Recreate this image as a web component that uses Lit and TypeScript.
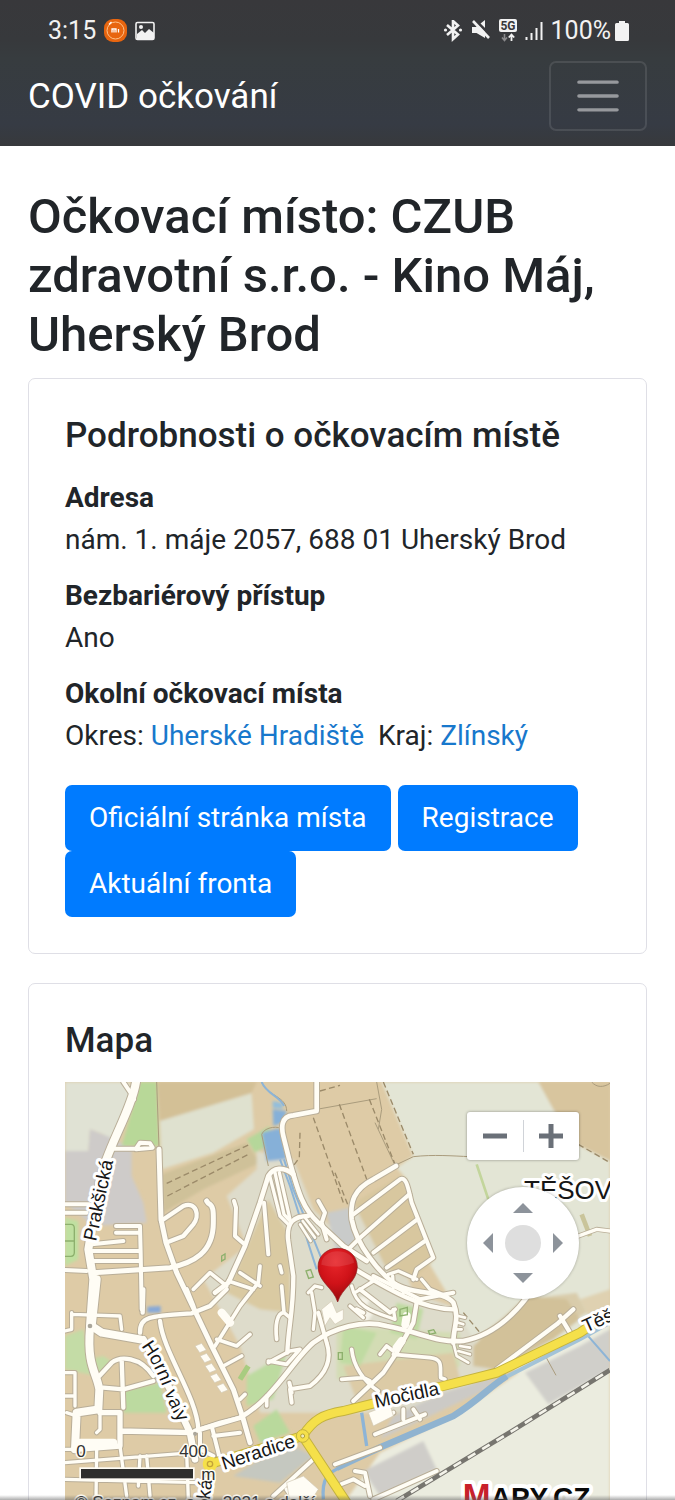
import { LitElement, html, svg, css } from "lit";
import { customElement, state } from "lit/decorators.js";

type Area = { fill: string; points: string };
type Road = { width: number; d: string };

/* Map drawing space: three units per screen pixel. */
const AREAS: Area[] = [
  { fill: "#e0e2d4", points: "15,8 205,8 225,40 165,200 130,165 90,150 85,215 15,215" },
  { fill: "#cecbc9", points: "15,215 85,215 90,150 165,180 215,215 215,290 250,370 260,430 100,440 15,370" },
  { fill: "#b8d898", points: "240,8 290,8 297,200 185,200" },
  { fill: "#d3c096", points: "292,8 590,8 575,40 300,125" },
  { fill: "#dfe1cf", points: "300,125 575,42 582,150 460,220 305,270" },
  { fill: "#cfc199", points: "305,285 560,190 600,250 430,330 310,400" },
  { fill: "#b5d79a", points: "560,180 630,140 620,200 585,220" },
  { fill: "#bfe0a0", points: "15,415 55,425 55,540 15,560" },
  { fill: "#dedccb", points: "590,215 700,240 760,390 840,470 880,390 890,360 1000,470 1060,640 1400,760 1500,700 1180,960 1060,1000 600,1000 540,800 430,600 560,500 500,350 590,270" },
  { fill: "#dacaa2", points: "560,500 625,360 690,470 690,700 600,690 500,640" },
  { fill: "#c9cbca", points: "800,400 870,385 890,500 830,520" },
  { fill: "#e3e5d5", points: "965,8 1650,8 1650,880 1400,900 1240,780 1160,640 1100,540 1040,300 1010,265 1060,230" },
  { fill: "#d8c59e", points: "1435,8 1650,8 1650,245 1540,190 1480,90" },
  { fill: "#d9ccab", points: "1400,660 1550,640 1580,700 1480,760 1300,860 1240,830 1260,770" },
  { fill: "#d2c199", points: "1240,800 1400,650 1520,660 1560,720 1480,780 1310,870 1240,860" },
  { fill: "#dfd1b1", points: "1560,660 1650,630 1650,720 1590,720" },
  { fill: "#d8c79f", points: "880,370 1020,290 1125,540 1060,600 980,570" },
  { fill: "#d3dcb4", points: "830,740 1200,760 1200,860 1140,900 960,900 830,900" },
  { fill: "#dccba6", points: "850,860 1180,820 1200,900 900,990" },
  { fill: "#bddba0", points: "560,890 680,820 640,960 560,980" },
  { fill: "#c0dba2", points: "850,740 950,760 900,860 840,850" },
  { fill: "#c0dba2", points: "1010,670 1090,690 1070,780 990,760" },
  { fill: "#bcdaa0", points: "185,935 300,910 320,1000 190,1000" },
  { fill: "#c4dca6", points: "15,770 70,750 90,840 130,830 160,850 110,890 15,870" },
  { fill: "#b9d99c", points: "580,1040 650,990 690,1060 600,1090" },
  { fill: "#c5c8c0", points: "520,1190 680,1090 760,1130 660,1210" },
  { fill: "#ebecdf", points: "960,1120 1200,1000 1390,870 1650,730 1650,1640 830,1640 860,1260" },
  { fill: "#d0cfca", points: "1395,880 1560,800 1650,750 1650,870 1465,975" },
  { fill: "#cfcdc9", points: "910,1175 1090,1085 1130,1170 960,1250" },
  { fill: "#cccac6", points: "1000,1010 1150,940 1310,890 1280,930 1090,1020 960,1080" },
  { fill: "#86a8d8", points: "262,682 302,680 302,700 262,700" },
  { fill: "#86b0d8", points: "606,160 650,148 664,150 680,240 620,246" },
  { fill: "#86b0d8", points: "638,90 680,95 668,130 640,140" },
  { fill: "#93bedb", points: "638,64 668,72 668,88 638,86" },
  { fill: "#f6f4ea", points: "900,650 930,660 920,680 940,700 915,740 890,700" },
];

const DETAILS = [
  "M290 8L297 205", "M605 8C620 50 680 50 680 95", "M605 165C615 140 660 140 665 150M605 165L625 260",
  "M950 8L965 90L955 150M770 90L950 58", "M945 130L1005 258L1060 232C1120 225 1180 230 1230 232",
  "M1595 8C1610 25 1630 25 1650 12", "M1448 815L1488 888",
];
const DASHES = [
  "M320 312L570 195", "M322 350L565 225", "M760 115L850 370", "M838 75L922 305", "M780 35L840 18", "M720 160L718 235L700 260",
  "M928 60L1005 255", "M970 8L1060 225", "M825 280L865 380", "M1555 195L1650 250", "M1210 700L1260 760",
];

const ROADS: Road[] = [
  { width: 24, d: "M228 8C215 90 140 210 120 300L85 510L100 600L90 740" },
  { width: 12, d: "M190 8L215 45L222 60" },
  { width: 12, d: "M160 208L228 208L240 190L270 192L278 205L228 210" },
  { width: 15, d: "M297 210L303 420L318 490L350 580L455 800L520 930L550 1020L570 1090" },
  { width: 13, d: "M303 425L370 380C410 365 420 410 400 435L370 470L318 490" },
  { width: 15, d: "M100 580L330 565C400 550 460 520 460 430C460 400 462 380 445 372L440 365" },
  { width: 12, d: "M95 495L190 485M95 515L240 515M100 545L240 545M168 440L240 440L242 520L245 690M168 460L238 460M15 375L90 375M15 400L80 400M15 572L80 575" },
  { width: 12, d: "M522 365L528 385L525 470L550 492" },
  { width: 14, d: "M770 8L770 95L700 108C660 110 665 150 670 170L690 250C715 340 730 390 775 430L850 500L920 545" },
  { width: 14, d: "M700 285C670 260 640 265 625 290L600 370L555 500L505 610L465 640" },
  { width: 12, d: "M612 370L625 525" },
  { width: 10, d: "M628 285L660 410L685 435M645 280L672 405L690 425M658 280L690 420" },
  { width: 13, d: "M745 410C700 410 680 430 684 480L700 590C700 700 685 740 682 820" },
  { width: 8, d: "M735 415L775 465M728 425L765 475M720 435L752 485" },
  { width: 12, d: "M775 365L795 400L785 430L800 480" },
  { width: 14, d: "M1008 260L940 300C880 330 870 370 875 420C890 500 960 580 1000 610C1060 650 1150 630 1180 670C1200 720 1180 740 1180 790" },
  { width: 12, d: "M880 405L1020 300C1040 290 1045 330 1055 370L1120 535L1070 570L1060 600" },
  { width: 12, d: "M895 480L1048 345M940 520L1072 420M980 565L1095 485M895 480L865 510" },
  { width: 10, d: "M985 585L1015 575L1070 600M1085 600L1110 630L1160 650" },
  { width: 13, d: "M885 570C970 620 1080 690 1180 690" },
  { width: 10, d: "M885 640L940 605M875 620C890 690 950 700 1005 720L1000 690M1000 625L998 590M1030 640L1035 625M870 680L910 715" },
  { width: 14, d: "M405 1055L540 1015C640 960 700 840 760 790C820 745 910 720 980 740C1090 760 1120 790 1210 785C1290 770 1350 720 1400 655" },
  { width: 13, d: "M1070 670L1060 730L1010 820L970 880L880 965" },
  { width: 8, d: "M1195 710L1215 715M1195 730L1210 735M1185 750L1205 750M1180 790L1190 830L1225 850M1200 800L1230 805M1195 815L1230 825" },
  { width: 11, d: "M1000 825L1110 835C1150 840 1140 860 1142 895L1155 900M960 825L980 800L1000 815M875 810C880 860 910 905 955 935M845 900L910 895L930 905" },
  { width: 10, d: "M745 640L765 620L785 625M755 640L765 700L760 750" },
  { width: 12, d: "M775 700L800 790C820 850 790 890 750 920L690 930L695 970M688 910L695 940" },
  { width: 11, d: "M665 620L672 700C650 700 645 740 650 780M672 700L690 715M625 845L680 855L720 810L690 815L625 850" },
  { width: 11, d: "M400 630L450 580L500 620M600 560L595 610L540 680L465 800M505 605L580 630M540 580L600 620M660 560L665 580" },
  { width: 13, d: "M395 702L450 680L500 630M240 760C240 710 270 710 395 702M250 630L248 700M380 630L400 680" },
  { width: 11, d: "M470 780L530 800L570 765M490 860L545 830M620 950L620 980M540 960L555 945" },
  { width: 24, d: "M110 600L95 740L125 760L240 780" },
  { width: 24, d: "M90 745C80 860 110 880 118 930L115 990L50 1000L45 1110" },
  { width: 20, d: "M250 780L330 930L390 1060L405 1140" },
  { width: 16, d: "M120 1000L180 1000L180 1055L400 1060M50 1110L180 1100L180 1050" },
  { width: 13, d: "M300 725C310 820 410 950 415 1050" },
  { width: 13, d: "M118 890L155 850C180 830 240 830 280 890M185 840L190 985M130 925L190 930L280 905" },
  { width: 10, d: "M35 700L35 750L15 755M35 705L180 710L185 750M15 880L45 880L45 980M15 950L45 950" },
  { width: 10, d: "M120 1000L120 1050L110 1060M20 1000L50 1010M45 1110L15 1110" },
  { width: 10, d: "M15 1150L400 1120M15 1200L420 1210M110 1110L108 1260M180 1100L200 1250M260 1130L270 1250M380 1120L385 1260M240 1130L235 1220" },
  { width: 12, d: "M405 1055L480 1030L540 1015M420 1060L420 1110L460 1130M455 1040L480 1140M460 1070L540 1060" },
  { width: 13, d: "M1310 870L1490 735L1540 690M1500 710L1530 760" },
  { width: 12, d: "M945 1065L1095 1005M1080 1020L1060 990M1030 1020L1030 990M955 1020L1000 1000" },
  { width: 12, d: "M825 1155L960 1105M940 1260L1130 1175M885 1175L915 1180L930 1250M830 1220L880 1200L915 1220" },
  { width: 12, d: "M640 1250L760 1140M680 1230L700 1260" },
  { width: 12, d: "M900 630L990 700L1005 690M890 690L910 700M1180 640L1080 660L940 590" },
];

const YELLOW = "M728 1070C760 1020 790 1005 850 995L930 975L1150 920L1310 880L1560 760L1650 700M728 1070L860 1270L960 1420M728 1070L450 1154";
const RIVER = "M830 1165L970 1100L1180 1010C1260 960 1280 930 1340 890";
const RIVER_UPPER = "M1330 897L1560 780L1650 730";
const STREAM = "M605 8C620 45 660 50 672 80M660 240L690 320L770 570M672 240L700 330L830 650M1580 765L1650 845";
const RAIL = "M1010 1265L1340 1065L1650 872";

@customElement("mapy-view")
export class MapyView extends LitElement {
  static styles = css`
    :host { display: block; position: relative; height: 533px; overflow: hidden; background: #dfcba8; }
    .map { display: block; width: 100%; height: 100%; }
    .casing { fill: none; stroke: #b9ae98; stroke-linecap: round; stroke-linejoin: round; }
    .road { fill: none; stroke: #fffdf5; stroke-linecap: round; stroke-linejoin: round; }
    .line { fill: none; stroke: #aa9c7d; stroke-width: 3; }
    .dash { fill: none; stroke: #9b8a69; stroke-width: 4; stroke-dasharray: 18 10; }
    .label { font-family: "Liberation Sans", Arial, sans-serif; fill: #161616; stroke: #fff; stroke-width: 18px; stroke-linejoin: round; paint-order: stroke; }
    .street { font-size: 57px; }
    .town { font-size: 78px; }
    .small { font-size: 51px; stroke-width: 9px; stroke: #fffdf5; fill: #333; }
    .logo { font-family: "Liberation Sans", Arial, sans-serif; font-weight: 700; stroke: #fff; stroke-width: 24px; stroke-linejoin: round; paint-order: stroke; }
    .zoom { position: absolute; top: 30px; right: 31px; width: 112px; height: 48px; display: flex; align-items: center; background: #fff; border-radius: 3px; box-shadow: 0 0 3px rgba(0, 0, 0, 0.4); }
    .pan { position: absolute; top: 105px; right: 31px; width: 112px; height: 112px; display: grid; grid-template: repeat(3, 1fr) / repeat(3, 1fr); place-items: center; box-sizing: border-box; padding: 4px; background: #fff; border-radius: 50%; box-shadow: 0 0 3px rgba(0, 0, 0, 0.3); }
    button { flex: 1; display: flex; align-items: center; justify-content: center; padding: 0; border: 0; background: none; height: 100%; }
    .split { width: 1px; height: 32px; background: #d0d3d8; }
    .up { grid-area: 1 / 2; }
    .left { grid-area: 2 / 1; }
    .center { grid-area: 2 / 2; width: 36px; height: 36px; border-radius: 50%; background: #dedede; }
    .right { grid-area: 2 / 3; }
    .down { grid-area: 3 / 2; }
  `;

  private arrow(d: string) {
    return html`<svg width="20" height="20" viewBox="0 0 20 20"><path d=${d} fill="#8d939b" /></svg>`;
  }

  render() {
    return html`
      <svg class="map" viewBox="15 8 1635 1599" preserveAspectRatio="xMinYMin slice" role="img" aria-label="Mapa okolí">
        <defs>
          <filter id="soft"><feGaussianBlur stdDeviation="5" /></filter>
          <radialGradient id="pin" cx="45%" cy="25%" r="75%">
            <stop offset="0" stop-color="#e8262b" /><stop offset="0.55" stop-color="#cf1218" /><stop offset="1" stop-color="#96090d" />
          </radialGradient>
          <path id="valy" d="M243 800C280 850 300 900 318 950C330 985 345 1010 372 1060" />
        </defs>
        <rect x="0" y="0" width="1700" height="1640" fill="#decba6" />
        <g filter="url(#soft)">${AREAS.map((a) => svg`<polygon points=${a.points} fill=${a.fill} />`)}</g>
        ${DETAILS.map((d) => svg`<path class="line" d=${d} />`)}
        ${DASHES.map((d) => svg`<path class="dash" d=${d} />`)}
        <path d=${STREAM} fill="none" stroke="#8db4d6" stroke-width="6" />
        <path d="M905 1000L920 1100M790 1260C785 1200 800 1180 850 1160" fill="none" stroke="#8db4d6" stroke-width="10" />
        <path d=${RIVER_UPPER} fill="none" stroke="#a3c3d8" stroke-width="12" />
        <path d=${RIVER} fill="none" stroke="#8fb3d0" stroke-width="20" stroke-linejoin="round" />
        ${ROADS.map((r) => svg`<path class="casing" d=${r.d} stroke-width=${r.width + 6} />`)}
        ${ROADS.map((r) => svg`<path class="road" d=${r.d} stroke-width=${r.width} />`)}
        <path class="road" stroke-width="24" d="M1040 710L1036 735M1010 805L1025 785M485 700L510 730M60 1090L160 1090" />
        <g fill="#fffdf5" stroke="#d0c7b2" stroke-width="2">
          <path d="M785 690L815 665L830 700L850 690L850 720L825 735L810 715L795 740Z" />
          <path d="M680 1210L730 1190L775 1230L730 1300L690 1270Z" />
          <path d="M925 1000L990 975L1000 1010L940 1040Z" />
          <path d="M405 800l20-8l14 20l-20 8ZM420 830l20-8l14 20l-20 8ZM435 860l20-8l14 20l-20 8ZM450 890l20-8l14 20l-20 8ZM470 920l20-8l14 20l-20 8Z" />
        </g>
        <g fill="none" stroke="#8db06d" stroke-width="4">
          <path d="M485 530l10-6v15l-10 6ZM738 575l14-4l8 22l-14 4ZM1020 690l22-6v22l-22 4ZM1105 755l16-4l6 10l-18 4ZM835 820h12v20h-12ZM15 435h18q10 0 10 12v72q0 12-10 12h-18M15 485h28" />
          <path d="M1250 255L1285 360" stroke="#c3d59c" stroke-width="8" />
          <path d="M540 900L565 860" stroke="#a8cc80" stroke-width="16" />
          <path d="M1565 405L1590 470" stroke="#c9c49a" stroke-width="14" />
        </g>
        <path class="casing" d="M1550 472L1610 450L1650 455" stroke-width="15" />
        <path class="road" d="M1550 472L1610 450L1650 455" stroke-width="10" />
        <path d=${YELLOW} fill="none" stroke="#c3b23e" stroke-width="30" />
        <path d=${YELLOW} fill="none" stroke="#f5e04a" stroke-width="24" />
        <circle cx="728" cy="1070" r="19" fill="#f5e04a" stroke="#c3b23e" stroke-width="3" />
        <circle cx="728" cy="1070" r="6" fill="#eee9c0" stroke="#b3a338" stroke-width="3" />
        <circle cx="450" cy="1154" r="22" fill="#f5e04a" />
        <circle cx="450" cy="1154" r="8" fill="none" stroke="#c3a338" stroke-width="4" />
        <circle cx="90" cy="740" r="7" fill="#aaa69a" />
        <circle cx="405" cy="1063" r="6" fill="#aaa69a" />
        <path d=${RAIL} fill="none" stroke="#77756f" stroke-width="14" />
        <path d=${RAIL} fill="none" stroke="#f4f3ea" stroke-width="8" stroke-dasharray="26 24" />

        <text class="label street" transform="translate(108 487) rotate(-78)">Prakšická</text>
        <text class="label street"><textPath href="#valy">Horní valy</textPath></text>
        <text class="label street" transform="translate(492 1172) rotate(-18)">Neradice</text>
        <text class="label street" transform="translate(948 986) rotate(-12)">Močidla</text>
        <text class="label street" transform="translate(1578 760) rotate(-24)">Těš</text>
        <text class="label street" transform="translate(425 1460) rotate(-83)">Vlčnovská</text>
        <text class="label town" x="1392" y="360">TĚŠOV</text>

        <rect x="58" y="1164" width="346" height="38" fill="#fffdf5" />
        <rect x="63" y="1169" width="336" height="28" fill="#2e2e2c" />
        <text class="label small" x="63" y="1133" text-anchor="middle">0</text>
        <text class="label small" x="400" y="1133" text-anchor="middle">400</text>
        <text class="label small" x="424" y="1202">m</text>
        <text class="label small" x="45" y="1286">© Seznam.cz, a.s., 2021 a další</text>

        <text class="logo" x="1292" y="1282" font-size="84" fill="#080808">APY.CZ</text>
        <text class="logo" x="1208" y="1282" font-size="100" fill="#c8202b">M</text>

        <path d="M833 668C820 625 776 610 774 563C774 530 800 507 833 507C866 507 892 530 892 563C890 610 846 625 833 668Z" fill="url(#pin)" stroke="#8c2020" stroke-width="2" />
        <path d="M784 556C784 530 808 516 833 516C858 516 882 530 882 550C850 562 820 566 784 556Z" fill="#fff" opacity="0.1" />
      </svg>
      <div class="zoom">
        <button aria-label="Oddálit"><svg width="24" height="24" viewBox="0 0 24 24"><path d="M0 12h24" stroke="#6a7078" stroke-width="5" /></svg></button>
        <span class="split"></span>
        <button aria-label="Přiblížit"><svg width="24" height="24" viewBox="0 0 24 24"><path d="M0 12h24M12 0v24" stroke="#6a7078" stroke-width="5" /></svg></button>
      </div>
      <div class="pan">
        <button class="up" aria-label="Nahoru">${this.arrow("M0 15L10 5L20 15Z")}</button>
        <button class="left" aria-label="Doleva">${this.arrow("M15 0L5 10L15 20Z")}</button>
        <button class="center" aria-label="Vystředit"></button>
        <button class="right" aria-label="Doprava">${this.arrow("M5 0L15 10L5 20Z")}</button>
        <button class="down" aria-label="Dolů">${this.arrow("M0 5L10 15L20 5Z")}</button>
      </div>
    `;
  }
}

@customElement("app-root")
export class AppRoot extends LitElement {
  @state() private menuOpen = false;

  static styles = css`
    :host { display: flex; flex-direction: column; height: 100vh; position: relative; overflow: hidden; background: #fff; color: #212529; font: 28px/42px Roboto, sans-serif; }
    * { box-sizing: border-box; }
    .top { flex: none; background: linear-gradient(#38383b 0%, #37393c 28%, #373c3f 40%, #363b44 85%, #37393c 100%); color: #fff; }
    .status { display: flex; align-items: center; justify-content: space-between; height: 47px; padding: 14px 46px 0 48px; font-size: 25px; line-height: 32px; color: #f2f2f2; }
    .group { display: flex; align-items: center; gap: 8px; }
    .level { display: flex; align-items: center; gap: 4px; }
    .nav { display: flex; align-items: center; justify-content: space-between; padding: 14px 28px 15px; }
    .brand { color: #fff; text-decoration: none; font-size: 35px; line-height: 44px; padding-top: 2px; }
    .toggler { display: flex; align-items: center; justify-content: center; width: 98px; height: 70px; padding: 0; background: none; border: 2px solid rgba(255, 255, 255, 0.1); border-radius: 7px; }
    .page { flex: 1; min-height: 0; overflow: auto; scrollbar-width: none; padding: 41px 28px 28px; }
    h1 { margin: 0 0 14px; font-size: 49px; line-height: 59px; font-weight: 500; }
    h2 { margin: 0 0 20px; font-size: 35px; line-height: 42px; font-weight: 500; }
    .card { padding: 36px; margin-bottom: 29px; border: 1px solid #dfdfe6; border-radius: 7px; }
    dl { margin: 0 0 28px; }
    dt { font-weight: 700; }
    dd { margin: 0 0 14px; }
    .regions { display: flex; flex-wrap: wrap; column-gap: 14px; }
    .regions a { color: #1878cc; text-decoration: none; }
    .actions { display: flex; flex-wrap: wrap; column-gap: 7px; }
    .btn { padding: 12px 24px; border-radius: 7px; background: #007bff; color: #fff; text-decoration: none; }
    .edge { position: absolute; left: 0; right: 0; bottom: 0; height: 5px; background: linear-gradient(rgba(90, 90, 90, 0), rgba(90, 90, 90, 0.5)); }
  `;

  render() {
    return html`
      <header class="top">
        <div class="status">
          <div class="group">
            <span>3:15</span>
            <svg width="23" height="23" viewBox="0 0 23 23"><rect width="23" height="23" rx="9" fill="#e8650f" /><circle cx="11.500" cy="11.500" r="8.500" fill="none" stroke="#ffc38b" stroke-width="1" /><path d="M8 13.500V10h4v3.500M10 11v2.500M14.500 10v3.500" fill="none" stroke="#fff" stroke-width="1.300" /><path d="M5 5.500L7.500 3" stroke="#fff" stroke-width="1.500" /></svg>
            <svg width="20" height="20" viewBox="0 0 20 20"><rect x="1" y="1.500" width="18" height="17" rx="1.500" fill="none" stroke="#f2f2f2" stroke-width="1.600" /><circle cx="6" cy="6" r="2" fill="#f2f2f2" /><path d="M2 13L7 9L10 12L14 8L19 12V18H2Z" fill="#f2f2f2" /></svg>
          </div>
          <div class="group">
            <svg width="20" height="22" viewBox="0 0 20 22"><path d="M4 5L15 14.500L10 19V1L15 5.500L4 15" fill="none" stroke="#f2f2f2" stroke-width="2.600" /><circle cx="2.500" cy="10" r="1.600" fill="#f2f2f2" /><circle cx="17.500" cy="10" r="1.600" fill="#f2f2f2" /></svg>
            <svg width="20" height="22" viewBox="0 0 20 22"><path d="M1 7H5L14 0V18L5.500 13H1Z" fill="#f2f2f2" /><path d="M4 0L19 15" stroke="#38383b" stroke-width="3" /><path d="M2 1L18 18" stroke="#f2f2f2" stroke-width="2.600" /></svg>
            <svg width="18" height="24" viewBox="0 0 18 24"><rect width="18" height="13" rx="2" fill="#f2f2f2" /><text x="9" y="11" text-anchor="middle" font-family="Roboto, sans-serif" font-size="12" font-weight="700" fill="#38383b">5G</text><path d="M5.500 15v6M3 18.500L5.500 21.500L8 18.500" fill="none" stroke="#8a8a8c" stroke-width="1.600" /><path d="M12.500 22v-6M9.800 18.500L12.500 15.500L15.200 18.500" fill="none" stroke="#f2f2f2" stroke-width="1.800" /></svg>
            <svg width="18" height="20" viewBox="0 0 18 20"><path d="M1.500 19v-3M6.500 19v-7M11.500 19V7M16.500 19V1" stroke="#f2f2f2" stroke-width="2" /></svg>
            <div class="level">
              <span>100%</span>
              <svg width="14" height="20" viewBox="0 0 14 20"><path d="M4 0h6v2h2.500q1.500 0 1.500 1.500v15q0 1.500-1.500 1.500h-11q-1.500 0-1.500-1.500v-15q0-1.500 1.500-1.500h2.500Z" fill="#f2f2f2" /></svg>
            </div>
          </div>
        </div>
        <nav class="nav">
          <a class="brand" href="#">COVID očkování</a>
          <button class="toggler" aria-label="Menu" aria-expanded=${this.menuOpen} @click=${() => (this.menuOpen = !this.menuOpen)}>
            <svg width="52" height="52" viewBox="0 0 30 30"><path d="M4 7h22M4 15h22M4 23h22" stroke="#97999d" stroke-width="2" stroke-linecap="round" /></svg>
          </button>
        </nav>
      </header>
      <main class="page">
        <h1>Očkovací místo: CZUB zdravotní s.r.o. - Kino Máj, Uherský Brod</h1>
        <section class="card">
          <h2>Podrobnosti o očkovacím místě</h2>
          <dl>
            <dt>Adresa</dt>
            <dd>nám. 1. máje 2057, 688 01 Uherský Brod</dd>
            <dt>Bezbariérový přístup</dt>
            <dd>Ano</dd>
            <dt>Okolní očkovací místa</dt>
            <dd class="regions"><span>Okres: <a href="#">Uherské Hradiště</a></span><span>Kraj: <a href="#">Zlínský</a></span></dd>
          </dl>
          <div class="actions">
            <a class="btn" href="#">Oficiální stránka místa</a>
            <a class="btn" href="#">Registrace</a>
            <a class="btn" href="#">Aktuální fronta</a>
          </div>
        </section>
        <section class="card">
          <h2>Mapa</h2>
          <mapy-view></mapy-view>
        </section>
      </main>
      <div class="edge"></div>
    `;
  }
}
